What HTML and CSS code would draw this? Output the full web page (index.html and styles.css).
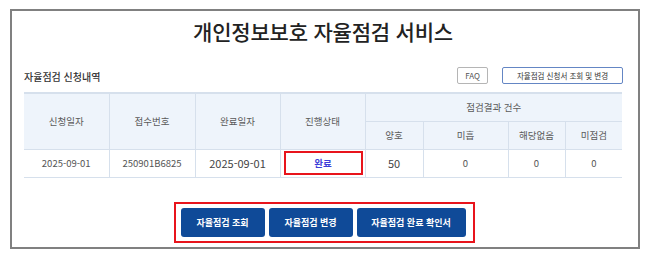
FILE: index.html
```html
<!DOCTYPE html>
<html lang="ko">
<head>
    <meta charset="UTF-8">
    <title>개인정보보호 자율점검 서비스</title>
    <link rel="stylesheet" href="styles.css">
</head>
<body>
    <div class="frame">
        <h1 class="title">개인정보보호 자율점검 서비스</h1>

        <div class="section-head">
            <h2 class="section-title">자율점검 신청내역</h2>
            <div class="head-actions">
                <button class="btn-line">FAQ</button>
                <button class="btn-line btn-line-blue">자율점검 신청서 조회 및 변경</button>
            </div>
        </div>

        <table class="history">
            <colgroup>
                <col style="width: 85px">
                <col style="width: 86px">
                <col style="width: 85px">
                <col style="width: 85px">
                <col style="width: 58px">
                <col style="width: 85px">
                <col style="width: 57px">
                <col style="width: 57px">
            </colgroup>
            <thead>
                <tr class="row-top">
                    <th rowspan="2">신청일자</th>
                    <th rowspan="2">접수번호</th>
                    <th rowspan="2">완료일자</th>
                    <th rowspan="2">진행상태</th>
                    <th colspan="4">점검결과 건수</th>
                </tr>
                <tr class="row-sub">
                    <th>양호</th>
                    <th>미흡</th>
                    <th>해당없음</th>
                    <th>미점검</th>
                </tr>
            </thead>
            <tbody>
                <tr class="row-data">
                    <td>2025-09-01</td>
                    <td>250901B6825</td>
                    <td class="big">2025-09-01</td>
                    <td class="status-cell"><span class="status-box">완료</span></td>
                    <td class="big">50</td>
                    <td>0</td>
                    <td>0</td>
                    <td>0</td>
                </tr>
            </tbody>
        </table>

        <div class="actions">
            <div class="actions-box">
                <button class="btn-solid">자율점검 조회</button>
                <button class="btn-solid">자율점검 변경</button>
                <button class="btn-solid btn-wide">자율점검 완료 확인서</button>
            </div>
        </div>
    </div>
</body>
</html>
```

FILE: styles.css
```css
* {
    margin: 0;
    padding: 0;
    box-sizing: border-box;
}

body {
    font-family: "Noto Sans CJK KR", "Noto Sans", sans-serif;
    background: #ffffff;
    color: #333333;
}

.frame {
    width: 630px;
    height: 240px;
    margin: 9px 0 0 10px;
    border: 2px solid #808080;
    padding: 0 16px 0 12px;
}

.title {
    font-size: 21px;
    font-weight: 500;
    color: #222222;
    text-align: center;
    line-height: 30px;
    margin-top: 5px;
    letter-spacing: -0.2px;
}

.section-head {
    display: flex;
    justify-content: space-between;
    align-items: center;
    margin-top: 20px;
    height: 18px;
}

.section-title {
    font-size: 10px;
    font-weight: 500;
    color: #333333;
    margin-top: 2px;
}

.head-actions {
    display: flex;
    gap: 14px;
    margin-right: -1px;
}

.btn-line {
    font-family: inherit;
    height: 17px;
    padding: 0 7px;
    font-size: 8px;
    color: #555555;
    background: #ffffff;
    border: 1px solid #b5b5b5;
    border-radius: 2px;
    line-height: 15px;
}

.btn-line-blue {
    width: 121px;
    border-color: #6486c4;
    color: #333333;
    font-size: 7.5px;
}

.history {
    width: 598px;
    margin-top: 8px;
    border-collapse: collapse;
    table-layout: fixed;
    border-top: 2px solid #d6e0ec;
    border-bottom: 1px solid #d6e0ec;
}

.history th,
.history td {
    border: 1px solid #d6e0ec;
    text-align: center;
    font-weight: 400;
}

.history tr > :first-child {
    border-left: none;
}

.history tr > :last-child {
    border-right: none;
}

.history th {
    background: #eef4fb;
    color: #5a5a5a;
    font-size: 9.5px;
}

.row-top th {
    height: 28px;
}

.row-sub th {
    height: 28px;
}

.row-data td {
    height: 28px;
    font-size: 9.5px;
    color: #555555;
}

.row-data td.big {
    font-size: 11px;
    color: #444444;
}

.status-cell {
    padding: 1px 2px 1px 3px;
}

.status-box {
    display: flex;
    align-items: center;
    justify-content: center;
    height: 24px;
    border: 2px solid #e8141c;
    color: #3d3dd8;
    font-weight: 700;
    font-size: 9.5px;
}

.actions {
    display: flex;
    justify-content: center;
    margin-top: 24px;
    margin-left: 2px;
}

.actions-box {
    display: flex;
    gap: 4px;
    padding: 4px 7px 4px 5px;
    border: 2px solid #e8141c;
}

.btn-solid {
    font-family: inherit;
    height: 29px;
    width: 84px;
    background: #0f4a98;
    color: #ffffff;
    font-size: 9px;
    font-weight: 700;
    border: none;
    border-radius: 3px;
}

.btn-wide {
    width: 109px;
}
```
